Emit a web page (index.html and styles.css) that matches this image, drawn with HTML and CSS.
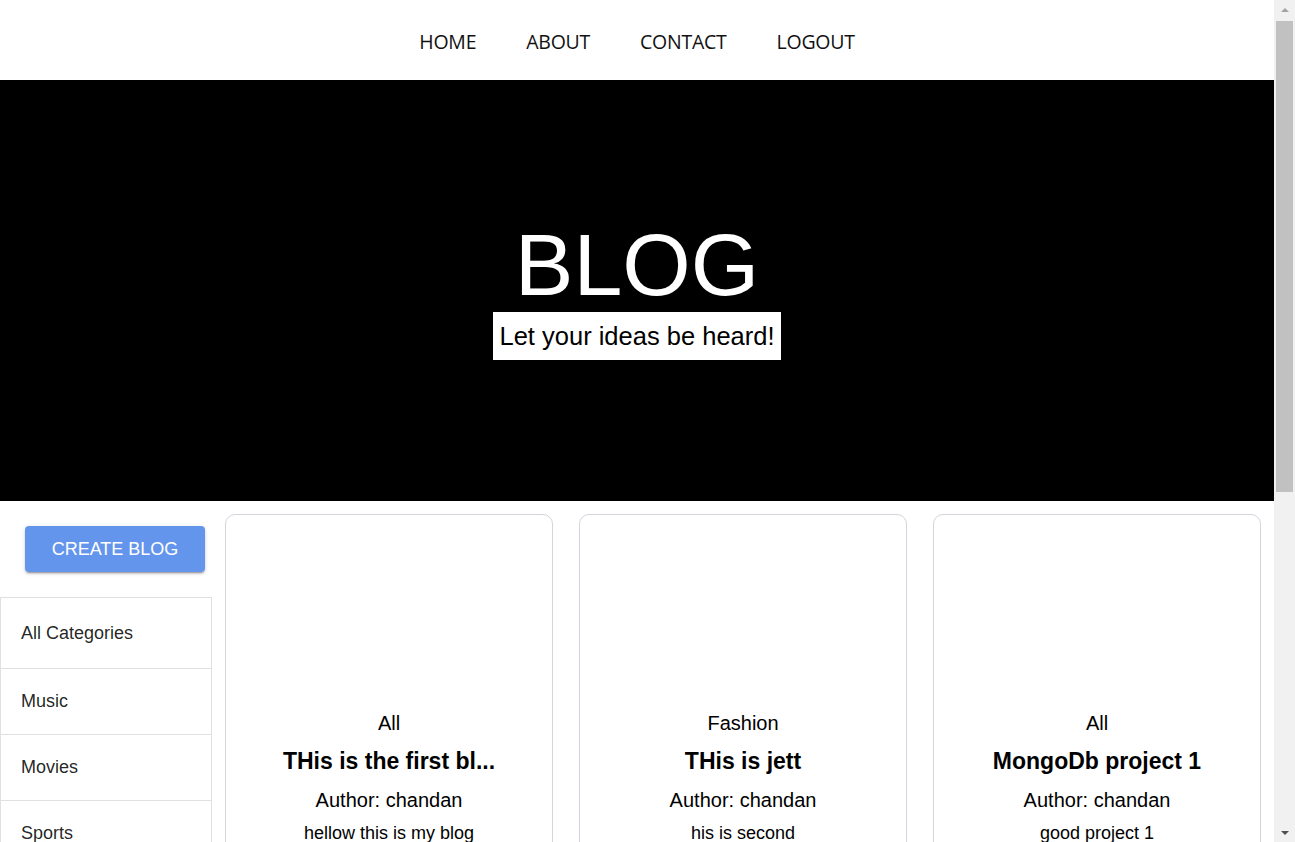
FILE: index.html
```html
<!DOCTYPE html>
<html lang="en">
<head>
<meta charset="utf-8">
<title>Blog</title>
<link rel="stylesheet" href="styles.css">
</head>
<body>
<div class="app">
  <div class="page">
    <header class="nav">
      <a class="nav-link" href="#">HOME</a>
      <a class="nav-link" href="#">ABOUT</a>
      <a class="nav-link" href="#">CONTACT</a>
      <a class="nav-link" href="#">LOGOUT</a>
    </header>
    <section class="hero">
      <h1 class="hero-title">BLOG</h1>
      <div class="hero-sub">Let your ideas be heard!</div>
    </section>
    <main class="content">
      <aside class="sidebar">
        <button class="create-btn">CREATE BLOG</button>
        <table class="cats">
          <tbody>
            <tr class="cat-head"><td>All Categories</td></tr>
            <tr><td>Music</td></tr>
            <tr><td>Movies</td></tr>
            <tr><td>Sports</td></tr>
            <tr><td>Tech</td></tr>
            <tr><td>Fashion</td></tr>
          </tbody>
        </table>
      </aside>
      <section class="posts">
        <div class="post-cell">
          <article class="card">
            <div class="thumb"></div>
            <p class="cat">All</p>
            <h2 class="title">THis is the first bl...</h2>
            <p class="author">Author: chandan</p>
            <p class="desc">hellow this is my blog</p>
          </article>
        </div>
        <div class="post-cell">
          <article class="card">
            <div class="thumb"></div>
            <p class="cat">Fashion</p>
            <h2 class="title">THis is jett</h2>
            <p class="author">Author: chandan</p>
            <p class="desc">his is second</p>
          </article>
        </div>
        <div class="post-cell">
          <article class="card">
            <div class="thumb"></div>
            <p class="cat">All</p>
            <h2 class="title">MongoDb project 1</h2>
            <p class="author">Author: chandan</p>
            <p class="desc">good project 1</p>
          </article>
        </div>
      </section>
    </main>
  </div>
  <div class="scrollbar">
    <div class="sb-arrow sb-up"></div>
    <div class="sb-track"><div class="sb-thumb"></div></div>
    <div class="sb-arrow sb-down"></div>
  </div>
</div>
</body>
</html>
```
FILE: styles.css
```css
html, body {
  margin: 0;
  padding: 0;
  height: 100%;
  overflow: hidden;
  background: #fff;
  font-family: "Liberation Sans", Arial, sans-serif;
}
.app {
  display: flex;
  height: 842px;
}
.page {
  flex: 1;
  overflow: hidden;
  min-width: 0;
}
.nav {
  height: 80px;
  box-sizing: border-box;
  padding-top: 3px;
  display: flex;
  align-items: center;
  justify-content: center;
  gap: 50px;
}
.nav-link {
  font-family: "Open Sans", "Noto Sans", sans-serif;
  font-size: 19.5px;
  color: #111;
  text-decoration: none;
  font-weight: 400;
  letter-spacing: -0.25px;
}
.hero {
  height: 421px;
  background: #000;
  display: flex;
  flex-direction: column;
  align-items: center;
  justify-content: center;
  gap: 3px;
}
.hero-title {
  margin: 0;
  color: #fff;
  font-weight: 400;
  font-size: 88px;
  line-height: 88px;
}
.hero-sub {
  background: #fff;
  color: #000;
  font-size: 25.5px;
  line-height: 30px;
  padding: 9px 6px;
}
.content {
  display: flex;
  align-items: flex-start;
}
.sidebar {
  width: 212px;
  flex: none;
}
.create-btn {
  display: block;
  margin: 25px 0 25px 25px;
  width: 180px;
  height: 46px;
  border: none;
  border-radius: 4px;
  background: #6495ed;
  color: #fff;
  font-family: "Liberation Sans", Arial, sans-serif;
  font-size: 18px;
  box-shadow: 0 3px 1px -2px rgba(0,0,0,0.2), 0 2px 2px 0 rgba(0,0,0,0.14), 0 1px 5px 0 rgba(0,0,0,0.12);
}
.cats {
  width: 212px;
  border-collapse: collapse;
  border: 1px solid #e0e0e0;
}
.cats td {
  border-bottom: 1px solid #e0e0e0;
  padding: 22px 20px 22px;
  font-size: 18px;
  line-height: 21px;
  color: rgba(0,0,0,0.87);
  text-align: left;
}
.cats .cat-head td {
  padding: 25px 20px 24px;
}
.posts {
  flex: 1;
  display: grid;
  grid-template-columns: repeat(3, 1fr);
}
.post-cell {
  padding: 13px;
}
.card {
  border: 1px solid #d4d4de;
  border-radius: 10px;
  text-align: center;
  color: #000;
  height: 400px;
}
.thumb {
  height: 196px;
}
.cat {
  margin: 0;
  font-size: 20px;
  line-height: 24px;
}
.title {
  margin: 12px 0 0;
  font-size: 23px;
  line-height: 28px;
  font-weight: 700;
}
.author {
  margin: 13px 0 0;
  font-size: 20px;
  line-height: 24px;
}
.desc {
  margin: 10px 0 0;
  font-size: 18px;
  line-height: 22px;
}
.scrollbar {
  width: 21px;
  flex: none;
  background: #f1f1f1;
  display: flex;
  flex-direction: column;
  align-items: center;
}
.sb-arrow {
  height: 21px;
  width: 17px;
  display: flex;
  align-items: center;
  justify-content: center;
}
.sb-up::before {
  content: "";
  border-left: 4px solid transparent;
  border-right: 4px solid transparent;
  border-bottom: 4px solid #a3a3a3;
  margin-top: -2px;
}
.sb-down::before {
  content: "";
  border-left: 4px solid transparent;
  border-right: 4px solid transparent;
  border-top: 4px solid #505050;
  margin-top: 2px;
}
.sb-track {
  flex: 1;
  width: 17px;
}
.sb-thumb {
  height: 471px;
  background: #c1c1c1;
}
```
